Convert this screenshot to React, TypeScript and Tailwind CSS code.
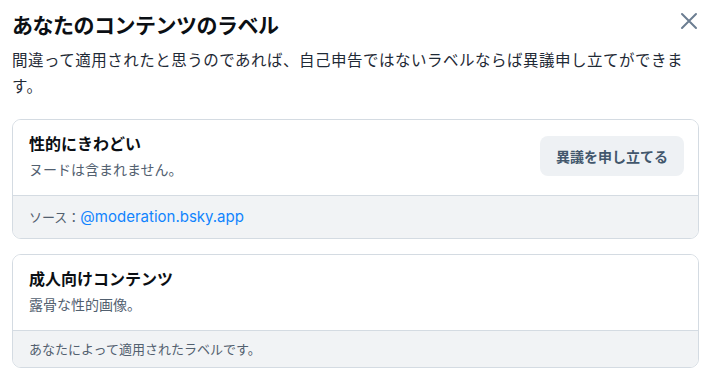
import React from 'react';

type LabelCardProps = {
  title: string;
  description: string;
  footer: React.ReactNode;
  canAppeal?: boolean;
  footerClass?: string;
};

const LabelCard: React.FC<LabelCardProps> = ({ title, description, footer, canAppeal, footerClass }) => {
  return (
    <div className="border border-[#d4dbe2] rounded-[9px] overflow-hidden">
      {/* Label info */}
      <div className="flex items-center justify-between pl-4 pr-[14px] pt-3 pb-[15px] bg-white">
        <div className="flex flex-col">
          <span className="text-[16px] leading-6 font-bold text-[#0b0f14]">{title}</span>
          <span className="mt-1 text-[14px] leading-5 text-[#52606f]">{description}</span>
        </div>
        {canAppeal && (
          <button className="h-10 px-4 rounded-lg bg-[#eef1f4] text-[14px] font-semibold text-[#42576c]">
            異議を申し立てる
          </button>
        )}
      </div>

      {/* Source */}
      <div className={`border-t border-[#d4dbe2] bg-[#f1f3f5] px-4 text-[13px] text-[#52606f] ${footerClass ?? ''}`}>
        {footer}
      </div>
    </div>
  );
};

export default function App() {
  return (
    <div
      className="w-[711px] h-[377px] bg-white p-3 overflow-hidden"
      style={{ fontFamily: '"Inter", "Noto Sans CJK JP", sans-serif' }}
    >
      {/* Header */}
      <div className="flex items-start justify-between">
        <h1 className="text-[21px] leading-7 font-bold tracking-[-0.5px] text-[#0b0f14]">
          あなたのコンテンツのラベル
        </h1>
        <button className="mr-[-3px] mt-[-4px] p-1 text-[#6c7e92]">
          <svg width="18" height="18" viewBox="0 0 18 18" fill="none" stroke="currentColor" strokeWidth="2" strokeLinecap="round">
            <path d="M2 2L16 16M16 2L2 16" />
          </svg>
        </button>
      </div>
      <p className="mt-2 text-[15.5px] tracking-[0.5px] leading-[26px] text-[#1f2a36]">
        間違って適用されたと思うのであれば、自己申告ではないラベルならば異議申し立てができま
        <br />
        す。
      </p>

      <div className="mt-[19px] flex flex-col gap-[15px]">
        <LabelCard
          title="性的にきわどい"
          description="ヌードは含まれません。"
          canAppeal
          footerClass="py-2.5 leading-[22px]"
          footer={
            <span>
              ソース：<span className="text-[15px] text-[#1083fe]">@moderation.bsky.app</span>
            </span>
          }
        />
        <LabelCard
          title="成人向けコンテンツ"
          description="露骨な性的画像。"
          footerClass="py-2 leading-5"
          footer="あなたによって適用されたラベルです。"
        />
      </div>
    </div>
  );
}
